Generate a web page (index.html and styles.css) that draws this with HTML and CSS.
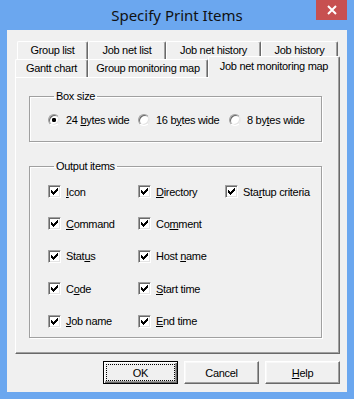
FILE: index.html
```html
<!DOCTYPE html>
<html>
<head>
<meta charset="utf-8">
<link rel="stylesheet" href="styles.css">
</head>
<body>
<div class="window">
  <div class="titlebar">
    <span></span>
    <div class="title">Specify Print Items</div>
    <div class="close"><svg width="10" height="10" viewBox="0 0 10 10"><path d="M1 1L9 9M9 1L1 9" stroke="#fff" stroke-width="2" fill="none"/></svg></div>
  </div>
  <div class="client">
    <div class="tabs">
      <div class="tabrow back">
        <div class="tab w-gl">Group list</div>
        <div class="tab w-jnl">Job net list</div>
        <div class="tab w-jnh">Job net history</div>
        <div class="tab w-jh">Job history</div>
      </div>
      <div class="tabrow front">
        <div class="tab w-gc">Gantt chart</div>
        <div class="tab w-gmm">Group monitoring map</div>
        <div class="tab sel w-jnmm">Job net monitoring map</div>
      </div>
    </div>
    <div class="panel">
      <fieldset class="group boxsize">
        <legend>Box size</legend>
        <div class="radios">
          <div class="opt w1"><span class="radio on"></span><span>24 <u>b</u>ytes wide</span></div>
          <div class="opt w2"><span class="radio"></span><span>16 b<u>y</u>tes wide</span></div>
          <div class="opt"><span class="radio"></span><span>8 by<u>t</u>es wide</span></div>
        </div>
      </fieldset>
      <fieldset class="group output">
        <legend>Output items</legend>
        <div class="checks">
          <div class="opt"><span class="cb"></span><span><u>I</u>con</span></div>
          <div class="opt"><span class="cb"></span><span><u>C</u>ommand</span></div>
          <div class="opt"><span class="cb"></span><span>Stat<u>u</u>s</span></div>
          <div class="opt"><span class="cb"></span><span>C<u>o</u>de</span></div>
          <div class="opt"><span class="cb"></span><span><u>J</u>ob name</span></div>
          <div class="opt"><span class="cb"></span><span><u>D</u>irectory</span></div>
          <div class="opt"><span class="cb"></span><span>Co<u>m</u>ment</span></div>
          <div class="opt"><span class="cb"></span><span>Host <u>n</u>ame</span></div>
          <div class="opt"><span class="cb"></span><span><u>S</u>tart time</span></div>
          <div class="opt"><span class="cb"></span><span><u>E</u>nd time</span></div>
          <div class="opt"><span class="cb"></span><span>Sta<u>r</u>tup criteria</span></div>
        </div>
      </fieldset>
    </div>
    <div class="buttons">
      <div class="btn default">OK</div>
      <div class="btn">Cancel</div>
      <div class="btn"><u>H</u>elp</div>
    </div>
  </div>
</div>
</body>
</html>
```

FILE: styles.css
```css
html, body {
  margin: 0;
  padding: 0;
}
body {
  width: 354px;
  height: 399px;
  overflow: hidden;
  font-family: "Liberation Sans", Arial, sans-serif;
  font-size: 11px;
  letter-spacing: -0.3px;
  color: #000;
}
.window {
  width: 354px;
  height: 399px;
  background: #6ba7ef;
  box-sizing: border-box;
  display: flex;
  flex-direction: column;
}
.titlebar {
  height: 30px;
  display: grid;
  grid-template-columns: 1fr auto 1fr;
  flex: none;
}
.title {
  font-family: "Noto Sans", "Open Sans", sans-serif;
  font-size: 15px;
  letter-spacing: 0;
  color: #111;
  line-height: 30px;
  padding-bottom: 1px;
}
.close {
  justify-self: end;
  align-self: start;
  width: 31px;
  height: 20px;
  margin-right: 7px;
  background: #c75050;
  display: flex;
  align-items: center;
  justify-content: center;
}
.close svg { display: block; }
.client {
  margin: 0 7px 7px;
  height: 362px;
  background: #f0f0f0;
  box-sizing: border-box;
  padding: 11px 7px 0 8px;
  display: flex;
  flex-direction: column;
}
.tabs {
  display: flex;
  flex-direction: column;
  flex: none;
}
.tabrow {
  display: flex;
  height: 18px;
}
.tabrow.back {
  margin-left: 2px;
}
.tab {
  box-sizing: border-box;
  height: 18px;
  border-top: 1px solid #fff;
  border-left: 1px solid #fff;
  border-right: 1px solid #696969;
  box-shadow: inset -1px 0 0 #a0a0a0;
  border-radius: 2px 2px 0 0;
  display: flex;
  align-items: center;
  justify-content: center;
  white-space: nowrap;
  background: #f0f0f0;
  padding-bottom: 1px;
}
.tab.sel {
  height: 22px;
  margin-top: -3px;
  margin-bottom: -1px;
  z-index: 1;
  padding-bottom: 4px;
}
.w-gl { width: 71px; }
.w-jnl { width: 78px; }
.w-jnh { width: 95px; }
.w-jh { width: 77px; }
.w-gc { width: 73px; }
.w-gmm { width: 120px; }
.w-jnmm { width: 132px; }

.panel {
  box-sizing: border-box;
  height: 277px;
  border-top: 1px solid #fff;
  border-left: 1px solid #fff;
  border-right: 1px solid #696969;
  border-bottom: 1px solid #696969;
  box-shadow: inset -1px -1px 0 #a0a0a0;
  padding: 0 17px 0 13px;
  display: flex;
  flex-direction: column;
  flex: none;
}
.group {
  margin: 0;
  border: 1px solid #a0a0a0;
  box-shadow: 1px 1px 0 #fff, inset 1px 1px 0 #fff;
  min-width: 0;
}
.group legend {
  margin-left: 6px;
  padding: 0 2px;
  line-height: 13px;
}
.boxsize {
  margin-top: 12px;
  padding: 10px 0 15px 18px;
}
.output {
  margin-top: 18px;
  padding: 12px 0 9px 18px;
}
.radios {
  display: flex;
  height: 13px;
  align-items: center;
}
.opt {
  display: flex;
  align-items: center;
  gap: 5px;
  height: 13px;
  white-space: nowrap;
}
.opt.w1 { width: 90px; }
.opt.w2 { width: 91px; }
.radios .opt { gap: 6px; }
.radio {
  width: 12px;
  height: 12px;
  flex: none;
  border-radius: 50%;
  box-sizing: border-box;
  background: #fff;
  border: 1px solid;
  border-color: #a0a0a0 #e8e8e8 #fff #a0a0a0;
  box-shadow: inset 1px 1px 0 #696969, inset -1px -1px 0 #e3e3e3;
  position: relative;
}
.radio.on {
  background: radial-gradient(circle at 50% 50%, #000 0 2px, #fff 2.3px);
}
.checks {
  display: grid;
  grid-template-rows: repeat(5, 13px);
  grid-template-columns: 90px 87px auto;
  grid-auto-flow: column;
  row-gap: 19.4px;
}
.cb {
  width: 13px;
  height: 13px;
  flex: none;
  box-sizing: border-box;
  border: 1px solid;
  border-color: #a0a0a0 #fff #fff #a0a0a0;
  box-shadow: inset 1px 1px 0 #696969, inset -1px -1px 0 #e3e3e3;
  background-color: #fff;
  background-image: url("data:image/svg+xml,%3Csvg xmlns='http://www.w3.org/2000/svg' width='11' height='11' shape-rendering='crispEdges'%3E%3Cpath d='M2 4h1v3h-1zM3 5h1v3h-1zM4 6h1v3h-1zM5 5h1v3h-1zM6 4h1v3h-1zM7 3h1v3h-1zM8 2h1v3h-1z' fill='%23000'/%3E%3C/svg%3E");
  background-repeat: no-repeat;
  background-position: 0 0;
}
u {
  text-decoration: underline;
  text-underline-offset: 1px;
}
.buttons {
  display: flex;
  justify-content: flex-end;
  gap: 6px;
  margin-top: 7px;
}
.btn {
  width: 75px;
  height: 23px;
  box-sizing: border-box;
  border: 1px solid;
  border-color: #fff #696969 #696969 #fff;
  box-shadow: inset -1px -1px 0 #a0a0a0, inset 1px 1px 0 #f8f8f8;
  display: flex;
  align-items: center;
  justify-content: center;
  background: #f0f0f0;
}
.btn.default {
  border: 1px solid #000;
  box-shadow: inset 1px 1px 0 #fff, inset -1px -1px 0 #696969, inset -2px -2px 0 #a0a0a0;
  outline: 1px dotted #000;
  outline-offset: -4px;
}
```
